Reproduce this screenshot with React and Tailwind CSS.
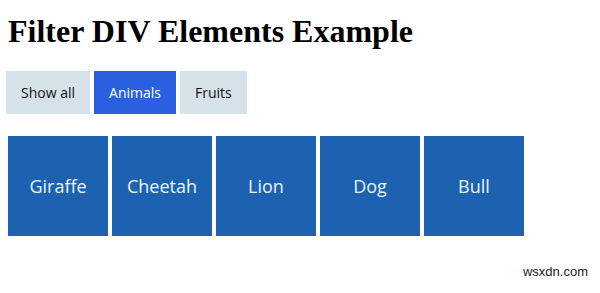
import React, { useState } from 'react';

const items = [
    { name: 'Giraffe', kind: 'animals' },
    { name: 'Cheetah', kind: 'animals' },
    { name: 'Lion', kind: 'animals' },
    { name: 'Dog', kind: 'animals' },
    { name: 'Bull', kind: 'animals' },
];

const filters = [
    { id: 'all', label: 'Show all' },
    { id: 'animals', label: 'Animals' },
    { id: 'fruits', label: 'Fruits' },
];

export default function App() {
    const [active, setActive] = useState('animals');
    const shown = items.filter((i) => active === 'all' || i.kind === active);

    return (
        <div className="relative w-[600px] h-[293px] bg-white overflow-hidden">
            <h1 className="ml-2 mt-[13px] text-[32px] leading-[37px] font-bold text-black font-['Liberation_Serif',serif]">
                Filter DIV Elements Example
            </h1>

            <div className="flex gap-1 ml-[6px] mt-[21px] font-['Open_Sans',sans-serif]">
                {filters.map((f) => (
                    <button
                        key={f.id}
                        onClick={() => setActive(f.id)}
                        className={`h-[43px] px-[15px] text-[14px] ${active === f.id ? 'bg-[#2a5fdf] text-white' : 'bg-[#d6e2e9] text-[#111]'}`}
                    >
                        {f.label}
                    </button>
                ))}
            </div>

            <div className="flex gap-1 ml-2 mt-[22px] font-['Open_Sans',sans-serif]">
                {shown.map((i) => (
                    <div
                        key={i.name}
                        className="w-[100px] h-[100px] bg-[#1c62b0] text-[#e8f4ff] text-[18px] flex items-center justify-center"
                    >
                        {i.name}
                    </div>
                ))}
            </div>

            <div className="absolute right-[12px] bottom-[12px] text-[13px] text-[#222] font-['Liberation_Sans',sans-serif]">
                wsxdn.com
            </div>
        </div>
    );
}
